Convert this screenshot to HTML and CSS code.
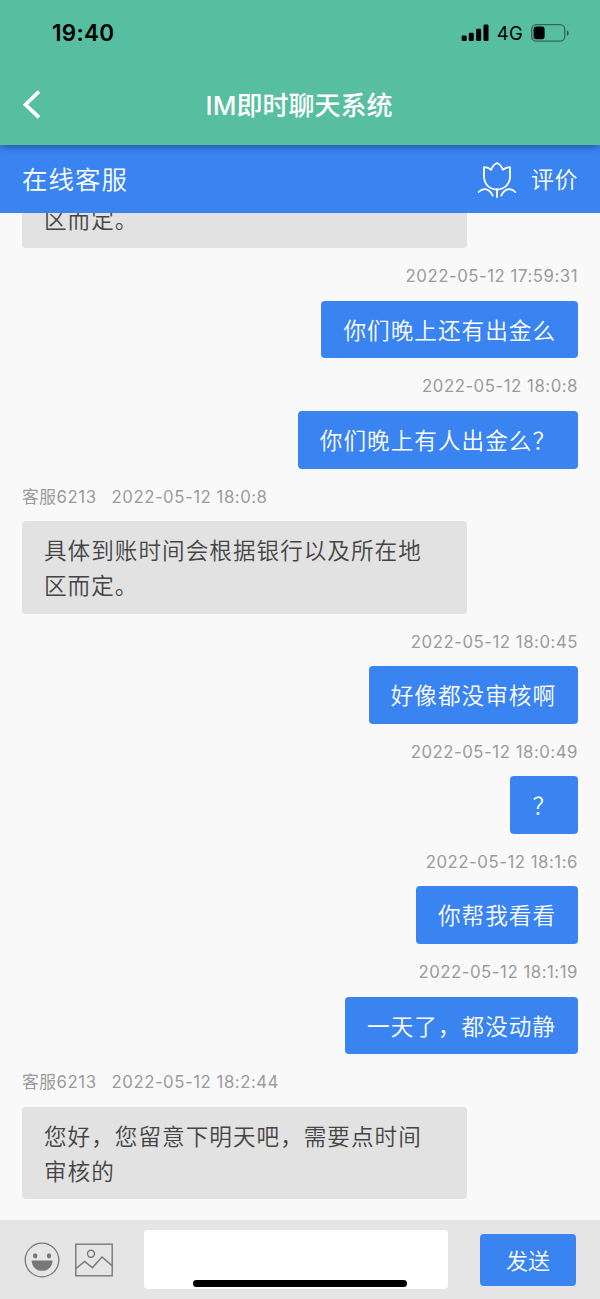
FILE: index.html
```html
<!DOCTYPE html>
<html lang="zh-CN">
<head>
    <meta charset="UTF-8">
    <meta name="viewport" content="width=device-width, initial-scale=1.0">
    <title>IM即时聊天系统</title>
    <link rel="stylesheet" href="styles.css">
</head>
<body>
    <div class="app">
        <header class="top">
            <div class="status-bar">
                <span class="clock">19:40</span>
                <div class="status-icons">
                    <svg class="signal" width="28" height="18" viewBox="0 0 28 18">
                        <rect x="0.7" y="11.5" width="5" height="5.5" rx="1.3"/>
                        <rect x="7.8" y="8.7" width="5" height="8.3" rx="1.3"/>
                        <rect x="15.1" y="4.8" width="5" height="12.2" rx="1.3"/>
                        <rect x="22.5" y="0.6" width="5" height="16.4" rx="1.3"/>
                    </svg>
                    <span class="network">4G</span>
                    <svg class="battery" width="40" height="20" viewBox="0 0 40 20">
                        <rect x="1.7" y="1.6" width="33" height="16.6" rx="4.6" fill="none" stroke="#000" stroke-opacity=".45" stroke-width="1.3"/>
                        <rect x="3.6" y="3.6" width="11" height="12.6" rx="2.6"/>
                        <path d="M36.8 7.2c2.6 1 2.6 4.8 0 5.8z" fill-opacity=".5"/>
                    </svg>
                </div>
            </div>
            <div class="nav">
                <svg class="back" width="20" height="30" viewBox="0 0 20 30">
                    <path d="M17 1.5 3.5 14.7l13.5 12.700" fill="none" stroke="#fff" stroke-width="3.8"/>
                </svg>
                <h1 class="nav-title">IM即时聊天系统</h1>
            </div>
        </header>

        <div class="service-bar">
            <span class="service-name">在线客服</span>
            <div class="rate">
                <svg width="40" height="38" viewBox="0 0 40 38" fill="none" stroke="#fff" stroke-width="1.8" stroke-linecap="round" stroke-linejoin="round">
                    <path d="M7 7.2c2.8.2 5.2 1 7.1 2.6 1.3-3.4 3.4-5.7 5.9-6.800 2.500 1.100 4.600 3.400 5.900 6.800 1.900-1.600 4.300-2.400 7.100-2.600v8.800c0 8-5.300 13.500-13 13.500S7 24 7 16z"/>
                    <path d="M20 29.500v7.500M1.700 32c5-5.200 11-3 14 3.500M38.300 32c-5-5.200-11-3-14 3.500"/>
                </svg>
                <span class="rate-text">评价</span>
            </div>
        </div>

        <main class="chat">
            <div class="message agent">
                <div class="bubble">具体到账时间会根据银行以及所在地区而定。</div>
            </div>
            <div class="message me">
                <div class="meta">2022-05-12 17:59:31</div>
                <div class="bubble">你们晚上还有出金么</div>
            </div>
            <div class="message me">
                <div class="meta">2022-05-12 18:0:8</div>
                <div class="bubble">你们晚上有人出金么？</div>
            </div>
            <div class="message agent">
                <div class="meta"><span class="agent-name">客服6213</span>2022-05-12 18:0:8</div>
                <div class="bubble">具体到账时间会根据银行以及所在地区而定。</div>
            </div>
            <div class="message me">
                <div class="meta">2022-05-12 18:0:45</div>
                <div class="bubble">好像都没审核啊</div>
            </div>
            <div class="message me">
                <div class="meta">2022-05-12 18:0:49</div>
                <div class="bubble">？</div>
            </div>
            <div class="message me">
                <div class="meta">2022-05-12 18:1:6</div>
                <div class="bubble">你帮我看看</div>
            </div>
            <div class="message me">
                <div class="meta">2022-05-12 18:1:19</div>
                <div class="bubble">一天了，都没动静</div>
            </div>
            <div class="message agent">
                <div class="meta"><span class="agent-name">客服6213</span>2022-05-12 18:2:44</div>
                <div class="bubble">您好，您留意下明天吧，需要点时间审核的</div>
            </div>
        </main>

        <footer class="input-bar">
            <svg class="smile" width="36" height="36" viewBox="0 0 36 36">
                <circle cx="18" cy="18" r="16.8" fill="none" stroke="#777" stroke-width="1.3"/>
                <ellipse cx="11.2" cy="13.8" rx="2.2" ry="2.6" fill="#777"/>
                <ellipse cx="25" cy="13.8" rx="2.2" ry="2.6" fill="#777"/>
                <path d="M7.7 18.4h20.8c0 6.2-4.600 10.400-10.400 10.400S7.700 24.600 7.700 18.400z" fill="#777"/>
            </svg>
            <svg class="picture" width="38" height="34" viewBox="0 0 38 34" fill="none" stroke="#777" stroke-width="1.4">
                <rect x=".8" y="1.2" width="36.4" height="31.6"/>
                <circle cx="16" cy="10.8" r="3.5"/>
                <path d="M1 25.5l8.7-7 7.7 6.2L27 14l10 8.6"/>
            </svg>
            <input type="text" class="text-input">
            <button class="send">发送</button>
            <div class="home-indicator"></div>
        </footer>
    </div>
</body>
</html>
```
FILE: styles.css
```css
* {
    box-sizing: border-box;
}
body {
    margin: 0;
    font-family: Inter, "Noto Sans CJK SC", sans-serif;
    background: #f9f9f9;
}
.app {
    display: flex;
    flex-direction: column;
    height: 1299px;
    overflow: hidden;
}
.top {
    position: relative;
    z-index: 2;
    flex: none;
    height: 145px;
    background: #58bea0;
    box-shadow: 0 3px 8px -2px rgba(0, 0, 0, 0.45);
}
.status-bar {
    display: flex;
    justify-content: space-between;
    align-items: center;
    height: 65px;
    padding: 0 30px 0 52px;
}
.clock {
    font-size: 22.5px;
    font-weight: 600;
    letter-spacing: 0.3px;
}
.status-icons {
    display: flex;
    align-items: center;
}
.network {
    margin: 1px 7px 0 8px;
    font-size: 18.5px;
    font-weight: 400;
    letter-spacing: 0.2px;
}
.nav {
    display: flex;
    align-items: center;
    height: 80px;
    padding: 0 22px;
}
.nav-title {
    flex: 1;
    margin: 0 22px 3px 0;
    text-align: center;
    font-size: 26px;
    font-weight: 500;
    color: #fff;
}
.service-bar {
    display: flex;
    flex: none;
    justify-content: space-between;
    align-items: center;
    height: 68px;
    padding: 0 22px;
    background: #3a84f1;
    color: #fff;
    font-family: "Noto Sans CJK SC DemiLight", "Noto Sans CJK SC", sans-serif;
    font-weight: 350;
    line-height: 30px;
}
.service-name {
    margin-bottom: 3px;
    font-size: 25.5px;
    letter-spacing: 1px;
}
.rate {
    display: flex;
    align-items: center;
    gap: 14px;
}
.rate-text {
    margin-bottom: 2px;
    font-size: 23px;
    letter-spacing: 0.5px;
}
.chat {
    display: flex;
    flex: 1;
    flex-direction: column;
    justify-content: flex-end;
    min-height: 0;
    padding: 0 22px 20.2px;
    overflow: hidden;
}
.message {
    display: flex;
    flex: none;
    flex-direction: column;
    align-items: flex-start;
}
.message.me {
    align-items: flex-end;
}
.meta {
    height: 52.4px;
    padding-top: 2px;
    line-height: 52.4px;
    font-size: 16.8px;
    letter-spacing: 0.52px;
    color: #9b9b9b;
    white-space: nowrap;
}
.agent-name {
    margin-right: 15px;
}
.bubble {
    max-width: 445px;
    padding: 12px 22px 11px;
    border-radius: 4px;
    background: #e2e2e2;
    color: #444;
    font-family: "Noto Sans CJK SC DemiLight", "Noto Sans CJK SC", sans-serif;
    font-size: 22.6px;
    font-weight: 350;
    line-height: 34.8px;
    letter-spacing: 1.02px;
}
.me .bubble {
    background: #3a84f1;
    color: #fff;
}
.input-bar {
    position: relative;
    display: flex;
    flex: none;
    align-items: center;
    height: 79.5px;
    padding: 0 24px;
    background: #e5e5e5;
}
.smile,
.picture {
    margin-top: 1px;
}
.picture {
    margin-left: 15px;
}
.text-input {
    width: 304px;
    height: 59px;
    margin-left: 31px;
    border: none;
    border-radius: 4px;
    background: #fff;
}
.send {
    width: 96px;
    height: 52px;
    margin: 1px 0 0 32px;
    padding: 0 0 2px;
    border: none;
    border-radius: 4px;
    background: #3a84f1;
    color: #fff;
    font-family: "Noto Sans CJK SC DemiLight", "Noto Sans CJK SC", sans-serif;
    font-size: 22px;
    font-weight: 350;
}
/* sits over the text field */
.home-indicator {
    position: absolute;
    left: 193px;
    bottom: 12px;
    width: 214px;
    height: 7px;
    border-radius: 4px;
    background: #000;
}
```
